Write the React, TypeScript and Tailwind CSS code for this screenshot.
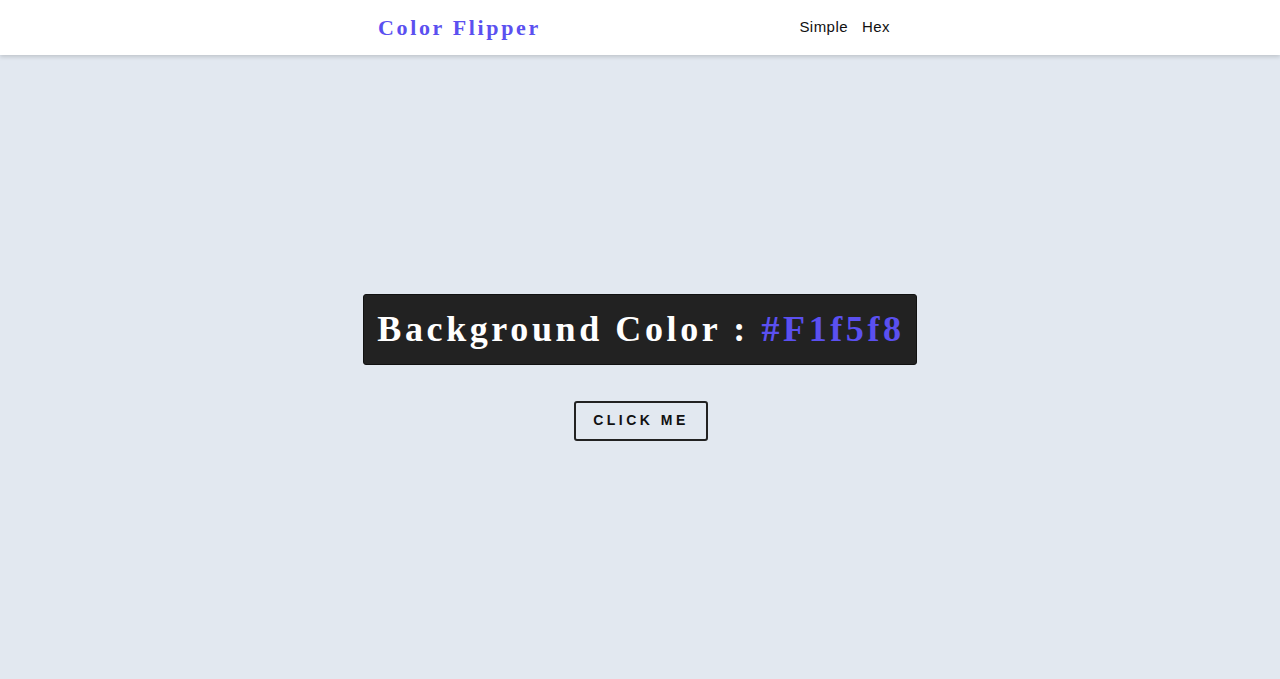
export default function App() {
    return (
        <div className="min-h-screen w-full bg-[#e2e8f0] flex flex-col">
            <nav className="h-[55px] w-full bg-white shadow-[0_2px_4px_rgba(0,0,0,0.15)] flex items-center shrink-0 relative z-10">
                <div className="mx-auto w-[524px] pr-[12px] flex items-center justify-between">
                    <h4 className="font-['Liberation_Serif',serif] font-bold text-[22px] tracking-[0.12em] text-[#5b50f0] leading-none">
                        Color Flipper
                    </h4>
                    <ul className="flex gap-[14px] font-['Liberation_Sans',sans-serif] text-[15px] text-[#111] tracking-[0.03em]">
                        <li>Simple</li>
                        <li>Hex</li>
                    </ul>
                </div>
            </nav>
            <main className="flex-1 flex flex-col items-center justify-center">
                <h2 className="bg-[#222] rounded-[3px] border border-[#111] pl-[13px] pr-[11px] h-[71px] flex items-center font-['Liberation_Serif',serif] font-bold text-[36px] tracking-[0.1em] text-white">
                    Background Color :&nbsp;<span className="text-[#5b50f0]">#F1f5f8</span>
                </h2>
                <button className="mt-[36px] ml-[2px] h-[40px] px-[17px] border-2 border-[#222] rounded-[3px] font-['Liberation_Sans',sans-serif] font-bold text-[14px] tracking-[0.25em] text-[#111] uppercase">
                    Click me
                </button>
            </main>
        </div>
    )
}
